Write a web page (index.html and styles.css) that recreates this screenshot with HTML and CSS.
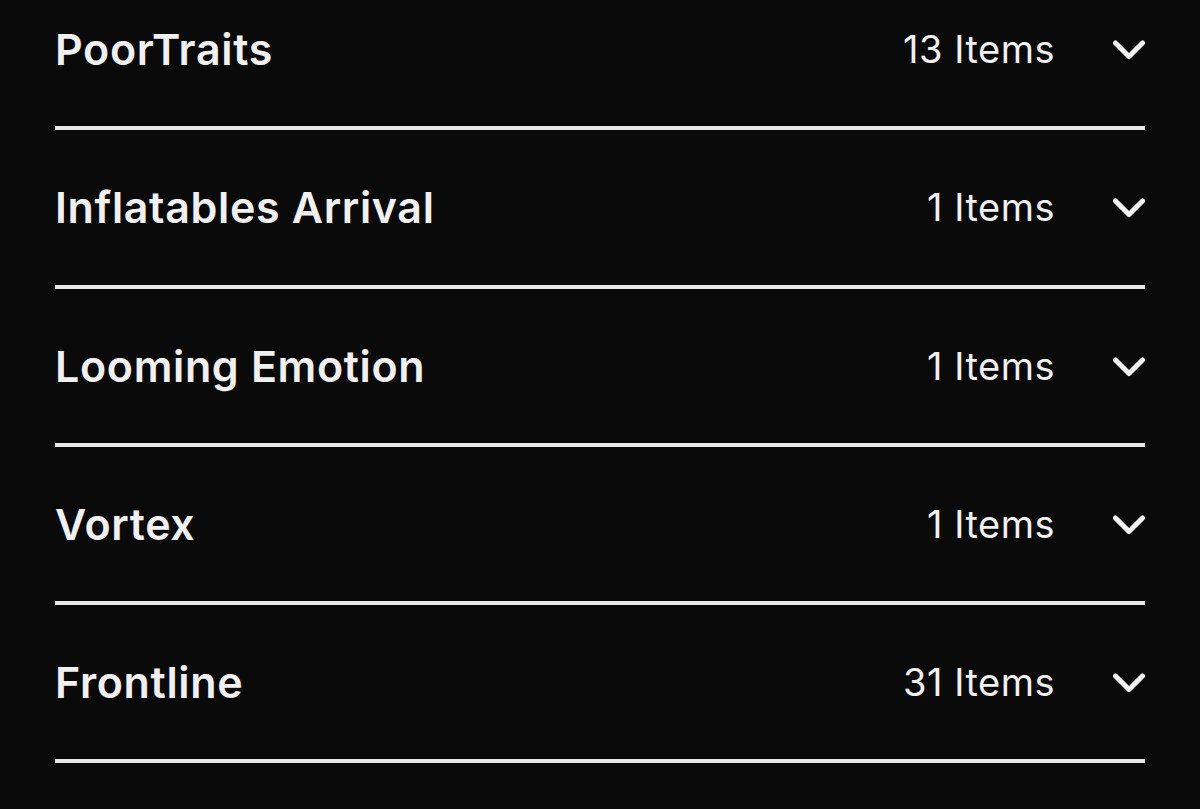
FILE: index.html
```html
<!DOCTYPE html>
<html lang="en">
<head>
<meta charset="utf-8">
<link rel="stylesheet" href="styles.css">
</head>
<body>
<div class="list">
  <div class="row">
    <span class="title">PoorTraits</span>
    <span class="count">13 Items</span>
    <svg class="chev" viewBox="0 0 32 20"><path d="M2.5 3 L16 16.5 L29.5 3"/></svg>
  </div>
  <div class="row">
    <span class="title">Inflatables Arrival</span>
    <span class="count">1 Items</span>
    <svg class="chev" viewBox="0 0 32 20"><path d="M2.5 3 L16 16.5 L29.5 3"/></svg>
  </div>
  <div class="row">
    <span class="title">Looming Emotion</span>
    <span class="count">1 Items</span>
    <svg class="chev" viewBox="0 0 32 20"><path d="M2.5 3 L16 16.5 L29.5 3"/></svg>
  </div>
  <div class="row">
    <span class="title">Vortex</span>
    <span class="count">1 Items</span>
    <svg class="chev" viewBox="0 0 32 20"><path d="M2.5 3 L16 16.5 L29.5 3"/></svg>
  </div>
  <div class="row">
    <span class="title">Frontline</span>
    <span class="count">31 Items</span>
    <svg class="chev" viewBox="0 0 32 20"><path d="M2.5 3 L16 16.5 L29.5 3"/></svg>
  </div>
</div>
</body>
</html>
```
FILE: styles.css
```css
html, body {
  margin: 0;
  padding: 0;
  background: #0a0a0a;
  height: 100%;
  overflow: hidden;
}
body {
  font-family: Inter, "Noto Sans", sans-serif;
  color: #f0f0f0;
}
.list {
  margin: -28px 55px 0 55px;
  display: flex;
  flex-direction: column;
}
.row {
  height: 154.3px;
  border-bottom: 4px solid #e8e8e8;
  display: flex;
  align-items: center;
}
.title {
  flex: 1;
  font-size: 43px;
  font-weight: 600;
  letter-spacing: 0.65px;
}
.count {
  font-size: 38px;
  font-weight: 400;
  letter-spacing: 0.5px;
  margin-right: 58px;
}
.chev {
  width: 32px;
  height: 20px;
  fill: none;
  stroke: #f4f4f4;
  stroke-width: 5;
  stroke-linecap: round;
  stroke-linejoin: round;
  margin-top: 2px;
}
```
